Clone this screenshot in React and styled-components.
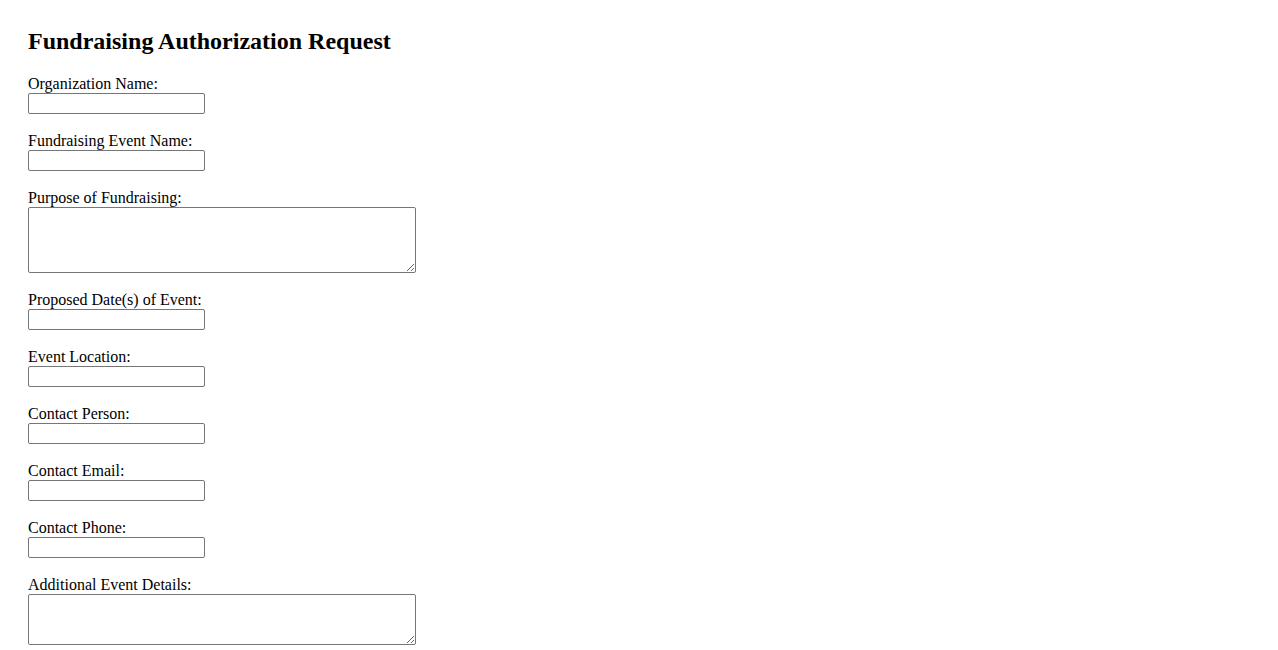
import React from 'react';
import styled, { createGlobalStyle } from 'styled-components';

const GlobalStyle = createGlobalStyle`
  html, body {
    margin: 0;
    padding: 0;
    background: #fff;
  }
  body {
    font-family: "Liberation Serif", "Times New Roman", serif;
    color: #000;
  }
`;

export const Page = styled.div`
  padding: 27px 28px 28px;
`;

export const Title = styled.h2`
  font-size: 24px;
  font-weight: bold;
  margin: 0 0 20px;
  line-height: 28px;
`;

export const Form = styled.form`
  display: flex;
  flex-direction: column;
  align-items: flex-start;
`;

export const Label = styled.label`
  display: block;
  font-size: 16px;
  line-height: 18px;
`;

export const Input = styled.input`
  display: block;
  box-sizing: border-box;
  width: 177px;
  height: 21px;
  margin: 0 0 18px;
  padding: 1px 2px;
  border: 1px solid #767676;
  border-radius: 2px;
  background: #fff;
  font-family: "Liberation Sans", Arial, sans-serif;
  font-size: 13px;
`;

export const TextArea = styled.textarea`
  display: block;
  box-sizing: border-box;
  width: 388px;
  height: ${({ $tall }) => ($tall ? '66px' : '51px')};
  margin: 0 0 18px;
  padding: 2px;
  border: 1px solid #767676;
  border-radius: 2px;
  background: #fff;
  font-family: "Liberation Mono", monospace;
  font-size: 13px;
`;

const fields = [
  { id: 'org', label: 'Organization Name:' },
  { id: 'event', label: 'Fundraising Event Name:' },
  { id: 'purpose', label: 'Purpose of Fundraising:', area: true, tall: true },
  { id: 'dates', label: 'Proposed Date(s) of Event:' },
  { id: 'location', label: 'Event Location:' },
  { id: 'person', label: 'Contact Person:' },
  { id: 'email', label: 'Contact Email:' },
  { id: 'phone', label: 'Contact Phone:' },
  { id: 'details', label: 'Additional Event Details:', area: true },
];

export default function App() {
  return (
    <>
      <GlobalStyle />
      <Page>
        <Title>Fundraising Authorization Request</Title>
        <Form onSubmit={(e) => e.preventDefault()}>
          {fields.map((f) => (
            <React.Fragment key={f.id}>
              <Label htmlFor={f.id}>{f.label}</Label>
              {f.area ? <TextArea id={f.id} $tall={f.tall} /> : <Input id={f.id} type="text" />}
            </React.Fragment>
          ))}
        </Form>
      </Page>
    </>
  );
}
